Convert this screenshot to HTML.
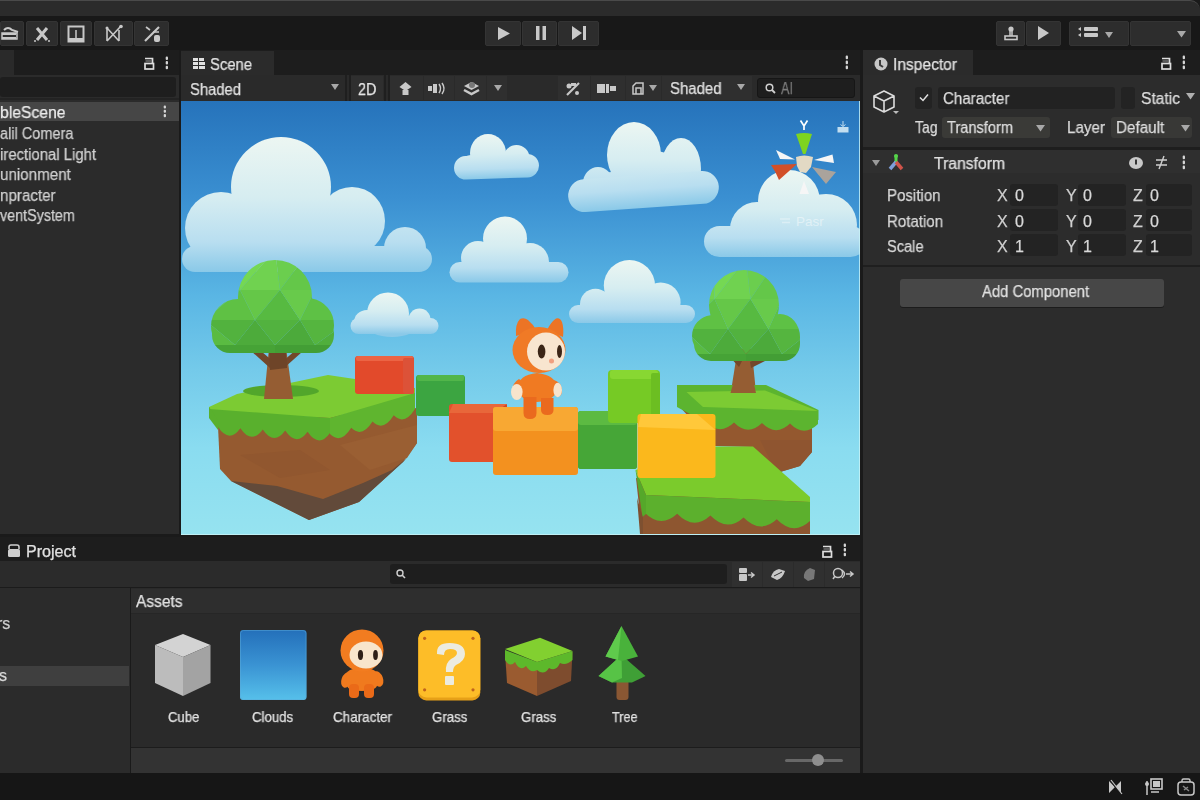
<!DOCTYPE html>
<html><head><meta charset="utf-8">
<style>
*{margin:0;padding:0;box-sizing:border-box}
html,body{width:1200px;height:800px;overflow:hidden;background:#1a1a1a;font-family:"Liberation Sans",sans-serif;color:#d4d4d4}
.a{position:absolute}
.t{position:absolute;white-space:nowrap;line-height:1;will-change:transform;-webkit-text-stroke:0.25px currentColor}
svg{position:absolute;overflow:visible}
</style></head><body>
<div class="a" style="left:0px;top:0px;width:1200px;height:16px;background:#2b2b2b;border-top:1px solid #4a4a4a;border-top-right-radius:10px"></div>
<div class="a" style="left:0px;top:16px;width:1200px;height:34px;background:#181818;"></div>
<div class="a" style="left:0px;top:21px;width:24px;height:25px;background:#2d2d2d;border-radius:2px;border:1px solid #343434"></div>
<div class="a" style="left:26px;top:21px;width:32px;height:25px;background:#2d2d2d;border-radius:2px;border:1px solid #343434"></div>
<div class="a" style="left:60px;top:21px;width:32px;height:25px;background:#2d2d2d;border-radius:2px;border:1px solid #343434"></div>
<div class="a" style="left:94px;top:21px;width:39px;height:25px;background:#2d2d2d;border-radius:2px;border:1px solid #343434"></div>
<div class="a" style="left:134px;top:21px;width:35px;height:25px;background:#2d2d2d;border-radius:2px;border:1px solid #343434"></div>
<div class="a" style="left:485px;top:21px;width:36px;height:25px;background:#2d2d2d;border-radius:2px;border:1px solid #343434"></div>
<div class="a" style="left:522px;top:21px;width:35px;height:25px;background:#2d2d2d;border-radius:2px;border:1px solid #343434"></div>
<div class="a" style="left:558px;top:21px;width:41px;height:25px;background:#2d2d2d;border-radius:2px;border:1px solid #343434"></div>
<div class="a" style="left:996px;top:21px;width:29px;height:25px;background:#2d2d2d;border-radius:2px;border:1px solid #343434"></div>
<div class="a" style="left:1026px;top:21px;width:35px;height:25px;background:#2d2d2d;border-radius:2px;border:1px solid #343434"></div>
<div class="a" style="left:1069px;top:21px;width:60px;height:25px;background:#2d2d2d;border-radius:2px;border:1px solid #343434"></div>
<div class="a" style="left:1130px;top:21px;width:61px;height:25px;background:#2d2d2d;border-radius:2px;border:1px solid #343434"></div>
<svg style="left:0px;top:24px" width="24" height="20" viewBox="0 0 24 20"><path d="M4 6 q4 -4 8 0 l6 2 M2 10 h14 M2 14 h14" stroke="#c8c8c8" stroke-width="2" fill="none"/><rect x="2" y="9" width="15" height="6" fill="none" stroke="#c8c8c8" stroke-width="1.5"/></svg>
<svg style="left:32px;top:24px" width="20" height="20" viewBox="0 0 20 20"><path d="M5 4 L15 16 M15 4 L5 16" stroke="#c8c8c8" stroke-width="3" fill="none"/><circle cx="3" cy="17" r="1" fill="#c8c8c8"/><circle cx="17" cy="17" r="1" fill="#c8c8c8"/></svg>
<svg style="left:67px;top:25px" width="18" height="18" viewBox="0 0 18 18"><rect x="1.5" y="1.5" width="15" height="15" fill="none" stroke="#c8c8c8" stroke-width="2"/><path d="M9 5 v8" stroke="#c8c8c8" stroke-width="1.5"/><rect x="2" y="13" width="14" height="3" fill="#c8c8c8"/></svg>
<svg style="left:104px;top:24px" width="20" height="20" viewBox="0 0 20 20"><path d="M3 4 V17 M3 4 L15 17 M15 6 V17 M3 17 L17 2" stroke="#c8c8c8" stroke-width="1.6" fill="none"/><circle cx="3" cy="4" r="1.5" fill="#c8c8c8"/><circle cx="17" cy="2.5" r="1.8" fill="#c8c8c8"/></svg>
<svg style="left:142px;top:24px" width="20" height="20" viewBox="0 0 20 20"><path d="M3 17 L17 3" stroke="#c8c8c8" stroke-width="2.2"/><path d="M4 3 l4 3 M11 8 h6" stroke="#c8c8c8" stroke-width="1.6"/><rect x="12" y="11" width="6" height="7" rx="2" fill="#c8c8c8"/></svg>
<svg style="left:497px;top:26px" width="14" height="15" viewBox="0 0 14 15"><path d="M1 1 L13 7.5 L1 14Z" fill="#c8c8c8"/></svg>
<svg style="left:535px;top:25px" width="12" height="16" viewBox="0 0 12 16"><rect x="1" y="1" width="3.5" height="14" fill="#c8c8c8"/><rect x="7.5" y="1" width="3.5" height="14" fill="#c8c8c8"/></svg>
<svg style="left:571px;top:25px" width="16" height="16" viewBox="0 0 16 16"><path d="M1 1 L11 8 L1 15Z" fill="#c8c8c8"/><rect x="12" y="1" width="3" height="14" fill="#c8c8c8"/></svg>
<svg style="left:1004px;top:25px" width="14" height="16" viewBox="0 0 14 16"><circle cx="7" cy="4" r="2.6" fill="#c8c8c8"/><path d="M6 6 v5 M8 6 v5" stroke="#c8c8c8" stroke-width="1.5"/><rect x="1" y="11" width="12" height="3.5" fill="none" stroke="#c8c8c8" stroke-width="1.6"/></svg>
<svg style="left:1036px;top:25px" width="14" height="16" viewBox="0 0 14 16"><path d="M2 1 L13 8 L2 15Z" fill="#c8c8c8"/></svg>
<svg style="left:1077px;top:26px" width="22" height="14" viewBox="0 0 22 14"><rect x="7" y="1" width="14" height="4" rx="1" fill="#c8c8c8"/><rect x="7" y="7" width="14" height="4" rx="1" fill="#c8c8c8"/><path d="M1 3 l3 -2 v4z M1 9 l3 -2 v4z" fill="#c8c8c8"/></svg>
<svg style="left:1105px;top:32px" width="10" height="8" viewBox="0 0 10 8"><path d="M0 0 h8 l-4 6z" fill="#a8a8a8"/></svg>
<svg style="left:1177px;top:31px" width="10" height="8" viewBox="0 0 10 8"><path d="M0 0 h9 l-4.5 6.5z" fill="#a8a8a8"/></svg>
<div class="a" style="left:0px;top:50px;width:179px;height:25px;background:#1d1d1d;"></div>
<div class="a" style="left:0px;top:50px;width:14px;height:25px;background:#2a2a2a;"></div>
<div class="a" style="left:0px;top:75px;width:179px;height:459px;background:#2b2b2b;"></div>
<div class="a" style="left:0px;top:77px;width:176px;height:20px;background:#1e1e1e;border-radius:3px;"></div>
<div class="a" style="left:0px;top:98px;width:179px;height:2px;background:#232323;"></div>
<div class="a" style="left:0px;top:102px;width:179px;height:19px;background:#464646;"></div>
<svg style="left:144px;top:57px" width="11" height="13" viewBox="0 0 11 13"><path d="M1 1.5 H8.5 V6.5" stroke="#dedede" stroke-width="1.7" fill="none"/><path d="M1.5 4 H7.5" stroke="#9a9a9a" stroke-width="1"/><rect x="1" y="6.5" width="8.5" height="5.5" fill="none" stroke="#dedede" stroke-width="1.7"/></svg>
<svg style="left:165px;top:56px" width="4" height="14" viewBox="0 0 4 14"><rect x="0.7" y="0.4" width="2.3" height="3.5" rx="1" fill="#d6d6d6"/><rect x="0.7" y="5.1" width="2.3" height="3.5" rx="1" fill="#d6d6d6"/><rect x="0.7" y="9.7" width="2.3" height="3.5" rx="1" fill="#d6d6d6"/></svg>
<svg style="left:163px;top:105px" width="4" height="13" viewBox="0 0 4 13"><rect x="0.7" y="0.4" width="2.3" height="3.1" rx="1" fill="#d6d6d6"/><rect x="0.7" y="4.7" width="2.3" height="3.1" rx="1" fill="#d6d6d6"/><rect x="0.7" y="9.1" width="2.3" height="3.1" rx="1" fill="#d6d6d6"/></svg>
<div class="t" style="left:0px;top:105.06px;font-size:16px;color:#ececec;transform:scaleX(0.9817);transform-origin:0 0;">bleScene</div>
<div class="t" style="left:0px;top:126.06px;font-size:16px;color:#d0d0d0;transform:scaleX(0.9071);transform-origin:0 0;">alil Comera</div>
<div class="t" style="left:0px;top:146.66px;font-size:16px;color:#d0d0d0;transform:scaleX(0.9305);transform-origin:0 0;">irectional Light</div>
<div class="t" style="left:0px;top:167.36px;font-size:16px;color:#d0d0d0;transform:scaleX(0.9476);transform-origin:0 0;">unionment</div>
<div class="t" style="left:0px;top:187.86px;font-size:16px;color:#d0d0d0;transform:scaleX(0.9473);transform-origin:0 0;">npracter</div>
<div class="t" style="left:0px;top:208.36px;font-size:16px;color:#d0d0d0;transform:scaleX(0.8949);transform-origin:0 0;">ventSystem</div>
<div class="a" style="left:181px;top:50px;width:679px;height:25px;background:#1d1d1d;"></div>
<div class="a" style="left:181px;top:51px;width:93px;height:24px;background:#2b2b2b;"></div>
<svg style="left:193px;top:58px" width="12" height="12" viewBox="0 0 12 12"><rect x="0" y="0" width="5" height="3" fill="#e0e0e0"/><rect x="6" y="0" width="5" height="3" fill="#e0e0e0"/><rect x="0" y="4" width="5" height="3" fill="#e0e0e0"/><rect x="6" y="4" width="6" height="3" fill="#e0e0e0"/><rect x="0" y="8" width="5" height="3" fill="#e0e0e0"/><rect x="6" y="8" width="6" height="3" fill="#e0e0e0"/></svg>
<div class="t" style="left:210px;top:57.06px;font-size:16px;color:#e2e2e2;transform:scaleX(0.9258);transform-origin:0 0;">Scene</div>
<svg style="left:845px;top:55px" width="4" height="15" viewBox="0 0 4 15"><rect x="0.7" y="0.4" width="2.3" height="3.8" rx="1" fill="#d6d6d6"/><rect x="0.7" y="5.4" width="2.3" height="3.8" rx="1" fill="#d6d6d6"/><rect x="0.7" y="10.4" width="2.3" height="3.8" rx="1" fill="#d6d6d6"/></svg>
<div class="a" style="left:181px;top:75px;width:679px;height:26px;background:#2a2a2a;"></div>
<div class="a" style="left:345px;top:75px;width:2px;height:26px;background:#1f1f1f;"></div>
<div class="a" style="left:349px;top:75px;width:2px;height:26px;background:#1f1f1f;"></div>
<div class="t" style="left:190px;top:82.06px;font-size:16px;color:#e0e0e0;transform:scaleX(0.9245);transform-origin:0 0;">Shaded</div>
<svg style="left:331px;top:84px" width="8" height="7" viewBox="0 0 8 7"><path d="M0 0 h8 l-4 6z" fill="#a8a8a8"/></svg>
<div class="a" style="left:351px;top:76px;width:32px;height:24px;background:#2f2f2f;"></div>
<div class="a" style="left:390px;top:76px;width:33px;height:24px;background:#2f2f2f;"></div>
<div class="a" style="left:424px;top:76px;width:30px;height:24px;background:#2f2f2f;"></div>
<div class="a" style="left:455px;top:76px;width:31px;height:24px;background:#2f2f2f;"></div>
<div class="a" style="left:487px;top:76px;width:20px;height:24px;background:#2f2f2f;"></div>
<div class="a" style="left:558px;top:76px;width:32px;height:24px;background:#2f2f2f;"></div>
<div class="a" style="left:591px;top:76px;width:34px;height:24px;background:#2f2f2f;"></div>
<div class="a" style="left:626px;top:76px;width:35px;height:24px;background:#2f2f2f;"></div>
<div class="a" style="left:662px;top:76px;width:90px;height:24px;background:#2f2f2f;"></div>
<div class="a" style="left:384px;top:75px;width:2px;height:26px;background:#1f1f1f;"></div>
<div class="a" style="left:388px;top:75px;width:2px;height:26px;background:#1f1f1f;"></div>
<div class="t" style="left:358px;top:81.56px;font-size:16px;color:#e6e6e6;transform:scaleX(0.8947);transform-origin:0 0;">2D</div>
<svg style="left:399px;top:82px" width="13" height="13" viewBox="0 0 13 13"><path d="M6.5 0 L12.5 5 L6.5 9 L0.5 5Z" fill="#c8c8c8"/><rect x="3.5" y="8" width="6" height="5" fill="#c8c8c8"/></svg>
<svg style="left:428px;top:83px" width="18" height="11" viewBox="0 0 18 11"><rect x="0" y="3" width="4" height="5" fill="#c8c8c8"/><rect x="5" y="1" width="4" height="9" fill="#c8c8c8"/><path d="M11 1 q3 4.5 0 9 M14 0 q4 5.5 0 11" stroke="#c8c8c8" stroke-width="1.5" fill="none"/></svg>
<svg style="left:463px;top:80px" width="17" height="15" viewBox="0 0 17 15"><path d="M1 10 L8.5 14 L16 10" stroke="#c8c8c8" stroke-width="2.5" fill="none"/><path d="M1 6 L8.5 2 L16 6 L8.5 10Z" fill="#c8c8c8"/><circle cx="9" cy="5" r="3" fill="#777"/></svg>
<svg style="left:494px;top:85px" width="8" height="7" viewBox="0 0 8 7"><path d="M0 0 h8 l-4 6z" fill="#a8a8a8"/></svg>
<svg style="left:565px;top:82px" width="16" height="14" viewBox="0 0 16 14"><path d="M2 13 L14 1" stroke="#c8c8c8" stroke-width="2.2"/><circle cx="4" cy="4" r="2.5" fill="#c8c8c8"/><circle cx="12" cy="11" r="2" fill="#c8c8c8"/><rect x="6" y="1" width="5" height="3" fill="#c8c8c8"/></svg>
<svg style="left:597px;top:84px" width="20" height="9" viewBox="0 0 20 9"><rect x="0" y="0" width="8" height="9" fill="#c8c8c8"/><rect x="9" y="0" width="3" height="9" fill="#c8c8c8"/><rect x="13" y="2" width="6" height="5" fill="#c8c8c8"/></svg>
<svg style="left:632px;top:82px" width="12" height="13" viewBox="0 0 12 13"><path d="M1 12 V4 L4 1 H11 V12 Z M4 12 V6 h5 v6" stroke="#c8c8c8" stroke-width="1.5" fill="none"/></svg>
<svg style="left:649px;top:85px" width="8" height="7" viewBox="0 0 8 7"><path d="M0 0 h8 l-4 6z" fill="#a8a8a8"/></svg>
<div class="t" style="left:669.7px;top:81.06px;font-size:16px;color:#e0e0e0;transform:scaleX(0.9354);transform-origin:0 0;">Shaded</div>
<svg style="left:737px;top:84px" width="9" height="7" viewBox="0 0 9 7"><path d="M0 0 h8 l-4 6z" fill="#a8a8a8"/></svg>
<div class="a" style="left:757px;top:78px;width:98px;height:20px;background:#1e1e1e;border-radius:3px;border:1px solid #161616"></div>
<svg style="left:765px;top:83px" width="11" height="11" viewBox="0 0 11 11"><circle cx="4.5" cy="4.5" r="3.3" stroke="#cfcfcf" stroke-width="1.5" fill="none"/><path d="M7 7 L10 10" stroke="#cfcfcf" stroke-width="1.8"/></svg>
<div class="t" style="left:781.3px;top:80.66px;font-size:16px;color:#7c7c7c;transform:scaleX(0.7938);transform-origin:0 0;">AI</div>
<svg style="left:181px;top:101px;overflow:hidden" width="679" height="434" viewBox="181 101 679 434"><defs><linearGradient id="sky" x1="0" y1="101" x2="0" y2="535" gradientUnits="userSpaceOnUse">
<stop offset="0" stop-color="#2673bb"/><stop offset="0.22" stop-color="#3a8fd1"/><stop offset="0.45" stop-color="#5ab6e4"/><stop offset="0.62" stop-color="#74caea"/><stop offset="0.8" stop-color="#8adcf0"/><stop offset="1" stop-color="#96e3f0"/></linearGradient><linearGradient id="c0" x1="0" y1="137" x2="0" y2="272" gradientUnits="userSpaceOnUse"><stop offset="0" stop-color="#ecf6f2"/><stop offset="0.45" stop-color="#d6edf1"/><stop offset="0.78" stop-color="#b8def0"/><stop offset="1" stop-color="#8ac9e8"/></linearGradient><linearGradient id="c1" x1="0" y1="134" x2="0" y2="178.5" gradientUnits="userSpaceOnUse"><stop offset="0" stop-color="#ecf6f2"/><stop offset="0.45" stop-color="#d6edf1"/><stop offset="0.78" stop-color="#b8def0"/><stop offset="1" stop-color="#8ac9e8"/></linearGradient><linearGradient id="c2" x1="0" y1="122" x2="0" y2="208" gradientUnits="userSpaceOnUse"><stop offset="0" stop-color="#ecf6f2"/><stop offset="0.45" stop-color="#d6edf1"/><stop offset="0.78" stop-color="#b8def0"/><stop offset="1" stop-color="#8ac9e8"/></linearGradient><linearGradient id="c3" x1="0" y1="170" x2="0" y2="257" gradientUnits="userSpaceOnUse"><stop offset="0" stop-color="#ecf6f2"/><stop offset="0.45" stop-color="#d6edf1"/><stop offset="0.78" stop-color="#b8def0"/><stop offset="1" stop-color="#8ac9e8"/></linearGradient><linearGradient id="c4" x1="0" y1="216.5" x2="0" y2="282.5" gradientUnits="userSpaceOnUse"><stop offset="0" stop-color="#ecf6f2"/><stop offset="0.45" stop-color="#d6edf1"/><stop offset="0.78" stop-color="#b8def0"/><stop offset="1" stop-color="#8ac9e8"/></linearGradient><linearGradient id="c5" x1="0" y1="292.5" x2="0" y2="334" gradientUnits="userSpaceOnUse"><stop offset="0" stop-color="#ecf6f2"/><stop offset="0.45" stop-color="#d6edf1"/><stop offset="0.78" stop-color="#b8def0"/><stop offset="1" stop-color="#8ac9e8"/></linearGradient><linearGradient id="c6" x1="0" y1="260.0" x2="0" y2="323" gradientUnits="userSpaceOnUse"><stop offset="0" stop-color="#ecf6f2"/><stop offset="0.45" stop-color="#d6edf1"/><stop offset="0.78" stop-color="#b8def0"/><stop offset="1" stop-color="#8ac9e8"/></linearGradient><clipPath id="tc1"><circle cx="275" cy="297" r="37"/><circle cx="238" cy="326" r="27"/><circle cx="307" cy="325" r="27"/><rect x="212" y="316" width="122" height="37" rx="18"/></clipPath><clipPath id="tc2"><circle cx="744" cy="305" r="35"/><circle cx="713" cy="336" r="21"/><ellipse cx="780" cy="337" rx="20" ry="23"/><rect x="694" y="324" width="106" height="37" rx="17"/></clipPath></defs><rect x="181" y="101" width="679" height="434" fill="url(#sky)"/><g fill="url(#c0)"><ellipse cx="281" cy="187" rx="50" ry="50"/><ellipse cx="221" cy="228" rx="36" ry="36"/><ellipse cx="278" cy="243" rx="23" ry="23"/><ellipse cx="352" cy="221" rx="33" ry="34"/><ellipse cx="405" cy="248" rx="21" ry="21"/><ellipse cx="305" cy="238" rx="32" ry="32"/><ellipse cx="250" cy="250" rx="22" ry="22"/><rect x="182" y="246" width="250" height="26" rx="13.0"/></g><g fill="url(#c1)"><ellipse cx="488" cy="153" rx="18" ry="19"/><ellipse cx="516.5" cy="158" rx="13" ry="13"/><ellipse cx="472" cy="166" rx="12" ry="11"/><rect x="454" y="155" width="85" height="23.5" rx="11.75" transform="rotate(-2 496.5 166.75)"/></g><g fill="url(#c2)"><ellipse cx="634" cy="155" rx="27" ry="33"/><ellipse cx="681" cy="169" rx="20" ry="31"/><ellipse cx="598" cy="183" rx="15" ry="16"/><ellipse cx="655" cy="175" rx="26" ry="24"/><ellipse cx="612" cy="186" rx="16" ry="14"/><rect x="568" y="175" width="151" height="33" rx="16.5" transform="rotate(-4 643.5 191.5)"/></g><g fill="url(#c3)"><ellipse cx="789" cy="201" rx="31" ry="31"/><ellipse cx="826" cy="225" rx="31" ry="31"/><ellipse cx="757" cy="229" rx="27" ry="27"/><rect x="704" y="226" width="162" height="31" rx="15.5"/></g><g fill="url(#c4)"><ellipse cx="505" cy="238.5" rx="22" ry="22"/><ellipse cx="478" cy="258" rx="17" ry="17"/><ellipse cx="530" cy="262" rx="19" ry="19"/><ellipse cx="506" cy="260" rx="28" ry="16"/><rect x="449.5" y="262" width="119.0" height="20.5" rx="10.25"/></g><g fill="url(#c5)"><ellipse cx="388" cy="313.5" rx="21" ry="21"/><ellipse cx="367" cy="322" rx="13" ry="12"/><ellipse cx="419.5" cy="319.5" rx="11" ry="11"/><ellipse cx="392" cy="325" rx="26" ry="12"/><rect x="350.5" y="318" width="88.0" height="16" rx="8.0"/></g><g fill="url(#c6)"><ellipse cx="629.4" cy="285.6" rx="25.6" ry="25.6"/><ellipse cx="595.5" cy="304.3" rx="15.5" ry="15.5"/><ellipse cx="660.6" cy="302.5" rx="20" ry="20"/><ellipse cx="628" cy="303" rx="32" ry="15"/><rect x="569" y="305" width="126" height="18" rx="9.0"/></g><polygon points="218,426 417,408 417,443 403,462 359,502 309,520 231,481 220,469" fill="#955a30" /><polygon points="231,481 277,486 323,499 363,483 392,470 407,458 403,462 359,502 309,520" fill="#624a3a" /><polygon points="340,445 417,425 417,443 407,458 370,470" fill="#9a5f33" /><polygon points="240,455 300,450 330,470 280,478" fill="#91572f" /><polygon points="209,407 237,394 328,375 415,388 415,396 330,418 209,412" fill="#7ccb33" /><path d="M209,409 L330,418 L330,433 Q318.8,448.5 307.6,431.8 Q296.4,447.30000000000007 285.2,430.6 Q274.0,446.1 262.8,429.4 Q251.60000000000002,444.9 240.4,428.2 Q229.2,443.70000000000005 218.0,427.0 Z" fill="#59b02d"/><path d="M330,418 L415,393 L415,409 Q404.375,425.925 393.75,415.25 Q383.125,432.175 372.5,421.5 Q361.875,438.425 351.25,427.75 Q340.625,444.675 330.0,434.0 Z" fill="#5fb52f"/><polygon points="209,407 209,418 218,430 218,420" fill="#59b02d" /><ellipse cx="281" cy="391" rx="38" ry="6" fill="#52a62b"/><path d="M269,348 L286,348 L293,399 L264,399 Z" fill="#955d33"/><path d="M250,350 L270,368 L274,362 L256,347 Z M302,352 L284,368 L282,362 L297,349 Z" fill="#73472a"/><path d="M269,350 L286,350 L287,368 L270,370Z" fill="#6e4428"/><g clip-path="url(#tc1)"><g transform="translate(0,0) scale(1,1)"><polygon points="205,250 240,250 240,290 205,290" fill="#70d250"/><polygon points="240,250 275,250 240,290" fill="#75d853"/><polygon points="275,250 240,290 280,290" fill="#70d250"/><polygon points="275,250 310,250 280,290" fill="#6bce4e"/><polygon points="310,250 280,290 315,290" fill="#64c749"/><polygon points="310,250 350,250 350,290 315,290" fill="#61c346"/><polygon points="205,290 240,290 205,320" fill="#69cd4c"/><polygon points="240,290 205,320 255,320" fill="#5fc144"/><polygon points="240,290 280,290 255,320" fill="#65c748"/><polygon points="280,290 255,320 300,320" fill="#57ba41"/><polygon points="280,290 315,290 300,320" fill="#68ca4b"/><polygon points="315,290 300,320 350,320" fill="#5ec145"/><polygon points="315,290 350,290 350,320" fill="#69cb4c"/><polygon points="205,320 255,320 235,345" fill="#52b23e"/><polygon points="205,320 235,345 205,345" fill="#5abb42"/><polygon points="255,320 235,345 275,345" fill="#4dab3b"/><polygon points="255,320 300,320 275,345" fill="#52b23f"/><polygon points="300,320 275,345 315,345" fill="#4caa3b"/><polygon points="300,320 350,320 315,345" fill="#55b53f"/><polygon points="350,320 315,345 350,345" fill="#50af3c"/><polygon points="205,345 275,345 275,370 205,370" fill="#46a336"/><polygon points="275,345 350,345 350,370 275,370" fill="#439e35"/></g></g><rect x="355" y="356" width="59" height="38" rx="3" fill="#e24a2b"/><rect x="356" y="356" width="57" height="5" rx="2" fill="#ec6444"/><rect x="403" y="358" width="11" height="36" rx="2" fill="#dc5238"/><rect x="416" y="375" width="49" height="41" rx="3" fill="#3ca541"/><rect x="417" y="375" width="47" height="6" rx="2" fill="#52b64a"/><rect x="449" y="404" width="58" height="58" rx="3" fill="#e2512c"/><polygon points="453,404 507,404 497,413 449,413" fill="#e8673a" /><polygon points="494,413 507,404 507,440 494,462" fill="#cc472b" /><rect x="493" y="407" width="85" height="68" rx="3" fill="#f3911f"/><rect x="493" y="407" width="85" height="24" rx="3" fill="#f8a833"/><rect x="578" y="411" width="59" height="58" rx="3" fill="#46a637"/><rect x="578" y="411" width="59" height="14" rx="3" fill="#5cba42"/><rect x="608" y="370" width="52" height="53" rx="4" fill="#76ca25"/><rect x="610" y="370" width="48" height="9" rx="3" fill="#88d732"/><rect x="651" y="373" width="9" height="50" rx="2" fill="#6cbe22"/><polygon points="678,405 812,426 812,452 800,466 780,472 752,447 715,446 715,425 690,418" fill="#94582f" /><polygon points="760,440 812,440 812,452 800,466 780,472 770,460" fill="#8f5530" /><path d="M737.7,349 L751.7,349 L756,393 L730.7,393 Z" fill="#955d33"/><path d="M727,354 L739,367 L742,361 L732,351 Z M767,360 L751,368 L750,362 L763,356 Z" fill="#73472a"/><g clip-path="url(#tc2)"><g transform="translate(498.5,9) scale(0.9,1.0)"><polygon points="205,250 240,250 240,290 205,290" fill="#70d250"/><polygon points="240,250 275,250 240,290" fill="#75d853"/><polygon points="275,250 240,290 280,290" fill="#70d250"/><polygon points="275,250 310,250 280,290" fill="#6bce4e"/><polygon points="310,250 280,290 315,290" fill="#64c749"/><polygon points="310,250 350,250 350,290 315,290" fill="#61c346"/><polygon points="205,290 240,290 205,320" fill="#69cd4c"/><polygon points="240,290 205,320 255,320" fill="#5fc144"/><polygon points="240,290 280,290 255,320" fill="#65c748"/><polygon points="280,290 255,320 300,320" fill="#57ba41"/><polygon points="280,290 315,290 300,320" fill="#68ca4b"/><polygon points="315,290 300,320 350,320" fill="#5ec145"/><polygon points="315,290 350,290 350,320" fill="#69cb4c"/><polygon points="205,320 255,320 235,345" fill="#52b23e"/><polygon points="205,320 235,345 205,345" fill="#5abb42"/><polygon points="255,320 235,345 275,345" fill="#4dab3b"/><polygon points="255,320 300,320 275,345" fill="#52b23f"/><polygon points="300,320 275,345 315,345" fill="#4caa3b"/><polygon points="300,320 350,320 315,345" fill="#55b53f"/><polygon points="350,320 315,345 350,345" fill="#50af3c"/><polygon points="205,345 275,345 275,370 205,370" fill="#46a336"/><polygon points="275,345 350,345 350,370 275,370" fill="#439e35"/></g></g><polygon points="677,385 766,385 818.5,410 818.5,420 712,422 690,414 677,407" fill="#5cb42f" /><path d="M703,407 L818,411 L818,424 Q804.0,437.55 790.0,423.5 Q776.0,437.05 762.0,423.0 Q748.0,436.55 734.0,422.5 Q720.0,436.05 706.0,422.0 Z" fill="#5cb42f"/><polygon points="686.5,392 765,390.5 818,411 703,407" fill="#7ccb33" /><path d="M730.5,393 L756,393 L754,384 L733,384Z" fill="#955d33"/><polygon points="636,478 810,500 810,534 642,534" fill="#8e5630" /><polygon points="635.5,470 714,446.6 753,446.6 810,497 810,502 646,495" fill="#7bcb2c" /><path d="M646,495 L810,502 L810,521 Q793.4,536.2 776.8,519.2 Q760.2,534.4 743.6,517.4 Q727.0,532.6 710.4,515.6 Q693.8,530.8000000000001 677.2,513.8 Q660.6,529.0 644.0,512.0 Z" fill="#5cb02d"/><polygon points="635.5,470 646,495 646,514 642.5,517" fill="#55a82a" /><path d="M637,498 L643,518 L643,534 L640,534 Z" fill="#7e5030"/><rect x="578" y="425" width="59" height="44" rx="3" fill="#46a637"/><rect x="637.5" y="414" width="78" height="64" rx="3" fill="#fbb81c"/><path d="M641,414 L697,414 L715.5,430 L638,427 Z" fill="#ffc83a"/><path d="M516,336 Q515,324 520,319 Q524,317 528,320 Q533,324 536,330 Z M547,330 Q551,322 556,318.5 Q560,317 562,322 Q564,328 563,337 Z" fill="#ec7425"/><ellipse cx="539" cy="350" rx="26.5" ry="23" fill="#f07a26"/><path d="M520,395 Q512,398 512,391 Q513,382 519,379 L524,383 Z M554,380 Q561,382 562,390 Q562,398 556,396 Z" fill="#ef7727"/><path d="M518,388 Q518,375 537,373 Q556,375 557,388 Q556,401 537,402 Q519,401 518,388Z" fill="#f07a22"/><path d="M523.5,397 h13 v16 q0,6 -6.5,6 q-6.5,0 -6.5,-6 Z M541,398 h12.5 v12 q0,5 -6,5 q-6.5,0 -6.5,-5 Z" fill="#ea6a1e"/><ellipse cx="516.8" cy="392" rx="5.8" ry="8" fill="#f7e4cc"/><ellipse cx="557.7" cy="390" rx="4.3" ry="7.2" fill="#f7e4cc"/><ellipse cx="546" cy="351.6" rx="19" ry="19" fill="#f8e5cf"/><ellipse cx="541.6" cy="351.6" rx="3.8" ry="7" fill="#3b2516"/><ellipse cx="559.5" cy="351.5" rx="2.5" ry="6.5" fill="#3b2516"/><circle cx="551.5" cy="361" r="2.5" fill="#ef9f7f"/><path d="M800.5,120.5 L804,126 L807.5,120.5 M804,126 V130" stroke="#ffffff" stroke-width="1.7" fill="none"/><path d="M796,134 Q804,132 812,134 L805.5,154 L803,154 Z" fill="#7ed420"/><polygon points="776,150 795,159.5 780,159" fill="#f6f6f6" /><polygon points="814,160 832.5,154.5 834,163" fill="#f6f6f6" /><path d="M771,165 L797,164 L779,180 Q776,172 771,165Z" fill="#d24f28"/><path d="M812,167 L836,172 L826,184 Z" fill="#aaa39c"/><polygon points="799.5,194 809,194 804,181" fill="#f6f6f6" /><path d="M796,157 Q804,154 813,157 L811,167 L806,173 L800,172 L797,166 Z" fill="#e2d9c4"/><rect x="837.5" y="127" width="11" height="5.5" fill="#c2def0"/><path d="M843,121 V126 M840.5,124.5 L843,126.5 L845.5,124.5" stroke="#c2def0" stroke-width="1" fill="none"/><text x="796" y="226" font-family="Liberation Sans" font-size="13.5" fill="#ffffff" opacity="0.45">Pasr</text><path d="M780,219 h10 M782,222.5 h8" stroke="#ffffff" stroke-width="1.3" opacity="0.35"/><path d="M181,534.5 H859.5 V101" stroke="#c8f2f6" stroke-width="1" fill="none" opacity="0.8"/></svg>
<div class="a" style="left:863px;top:50px;width:337px;height:25px;background:#1d1d1d;"></div>
<div class="a" style="left:863px;top:50px;width:110px;height:25px;background:#2b2b2b;"></div>
<svg style="left:874px;top:57px" width="14" height="14" viewBox="0 0 14 14"><circle cx="7" cy="7" r="6.5" fill="#c6c6c6"/><path d="M6 3 V8 L9 10" stroke="#3a3a3a" stroke-width="2" fill="none"/></svg>
<div class="t" style="left:893px;top:57.16px;font-size:16px;color:#e2e2e2;transform:scaleX(0.9725);transform-origin:0 0;">Inspector</div>
<svg style="left:1161px;top:57px" width="11" height="13" viewBox="0 0 11 13"><path d="M1 1.5 H8.5 V6.5" stroke="#dedede" stroke-width="1.7" fill="none"/><path d="M1.5 4 H7.5" stroke="#9a9a9a" stroke-width="1"/><rect x="1" y="6.5" width="8.5" height="5.5" fill="none" stroke="#dedede" stroke-width="1.7"/></svg>
<svg style="left:1182px;top:55px" width="4" height="15" viewBox="0 0 4 15"><rect x="0.7" y="0.4" width="2.3" height="3.8" rx="1" fill="#d6d6d6"/><rect x="0.7" y="5.4" width="2.3" height="3.8" rx="1" fill="#d6d6d6"/><rect x="0.7" y="10.4" width="2.3" height="3.8" rx="1" fill="#d6d6d6"/></svg>
<div class="a" style="left:863px;top:75px;width:337px;height:698px;background:#2c2c2c;"></div>
<svg style="left:873px;top:89px" width="26" height="27" viewBox="0 0 26 27"><path d="M11 2 L21 7 L21 18 L11 23 L1 18 L1 7 Z M1 7 L11 12 L21 7 M11 12 V23" stroke="#dcdcdc" stroke-width="1.6" fill="none" stroke-linejoin="round"/><path d="M20 22 h6 l-3 3z" fill="#bbb"/></svg>
<div class="a" style="left:915px;top:87px;width:17px;height:22px;background:#232323;border-radius:3px;"></div>
<svg style="left:919px;top:93px" width="10" height="9" viewBox="0 0 10 9"><path d="M1 4.5 L4 7.5 L9 1.5" stroke="#e0e0e0" stroke-width="1.5" fill="none"/></svg>
<div class="a" style="left:938px;top:87px;width:177px;height:22px;background:#222222;border-radius:3px;"></div>
<div class="t" style="left:943px;top:91.16px;font-size:16px;color:#dedede;transform:scaleX(0.9452);transform-origin:0 0;">Character</div>
<div class="a" style="left:1121px;top:87px;width:14px;height:22px;background:#232323;border-radius:3px;"></div>
<div class="t" style="left:1141px;top:91.16px;font-size:16px;color:#dedede;transform:scaleX(0.9746);transform-origin:0 0;">Static</div>
<svg style="left:1186px;top:93px" width="9" height="7" viewBox="0 0 9 7"><path d="M0 0 h9 l-4.5 6.5z" fill="#b0b0b0"/></svg>
<div class="t" style="left:914.5px;top:119.86px;font-size:16px;color:#dcdcdc;transform:scaleX(0.8722);transform-origin:0 0;">Tag</div>
<div class="a" style="left:942px;top:117px;width:108px;height:21px;background:#3a3a37;border-radius:3px;"></div>
<div class="t" style="left:947px;top:119.86px;font-size:16px;color:#dedede;transform:scaleX(0.9128);transform-origin:0 0;">Transform</div>
<svg style="left:1036px;top:125px" width="9" height="7" viewBox="0 0 9 7"><path d="M0 0 h9 l-4.5 6.5z" fill="#a8a8a8"/></svg>
<div class="t" style="left:1067px;top:119.86px;font-size:16px;color:#dcdcdc;transform:scaleX(0.9494);transform-origin:0 0;">Layer</div>
<div class="a" style="left:1111px;top:117px;width:81px;height:21px;background:#383836;border-radius:3px;"></div>
<div class="t" style="left:1116.4px;top:119.86px;font-size:16px;color:#dedede;transform:scaleX(0.9508);transform-origin:0 0;">Default</div>
<svg style="left:1181px;top:125px" width="9" height="7" viewBox="0 0 9 7"><path d="M0 0 h9 l-4.5 6.5z" fill="#a8a8a8"/></svg>
<div class="a" style="left:863px;top:147px;width:337px;height:3px;background:#1e1e1e;"></div>
<div class="a" style="left:863px;top:150px;width:337px;height:23px;background:#2f2f2f;"></div>
<svg style="left:872px;top:160px" width="8" height="6" viewBox="0 0 8 6"><path d="M0 0 h8 l-4 6z" fill="#9a9a9a"/></svg>
<svg style="left:888px;top:154px" width="16" height="17" viewBox="0 0 16 17"><path d="M8 8 L8 1" stroke="#55d44a" stroke-width="3"/><path d="M8 8 L2 15" stroke="#7e9ed8" stroke-width="3.5"/><path d="M8 8 L14 15" stroke="#d0544a" stroke-width="3.5"/><circle cx="8" cy="2" r="2" fill="#55d44a"/></svg>
<div class="t" style="left:934px;top:156.36px;font-size:16px;color:#e0e0e0;transform:scaleX(0.9820);transform-origin:0 0;">Transform</div>
<svg style="left:1129px;top:157px" width="14" height="12" viewBox="0 0 14 12"><ellipse cx="7" cy="6" rx="7" ry="6" fill="#c8c8c8"/><rect x="6" y="2.5" width="2" height="5" fill="#333"/></svg>
<svg style="left:1155px;top:155px" width="13" height="15" viewBox="0 0 13 15"><path d="M1 5 H12 M1 10 H12 M9 1 L4 14" stroke="#cfcfcf" stroke-width="1.4" fill="none"/></svg>
<svg style="left:1182px;top:155px" width="4" height="15" viewBox="0 0 4 15"><rect x="0.7" y="0.4" width="2.3" height="3.8" rx="1" fill="#d6d6d6"/><rect x="0.7" y="5.4" width="2.3" height="3.8" rx="1" fill="#d6d6d6"/><rect x="0.7" y="10.4" width="2.3" height="3.8" rx="1" fill="#d6d6d6"/></svg>
<div class="t" style="left:887px;top:188.36px;font-size:16px;color:#d8d8d8;transform:scaleX(0.9399);transform-origin:0 0;">Position</div>
<div class="t" style="left:997.4px;top:188.36px;font-size:16px;color:#d0d0d0;">X</div>
<div class="a" style="left:1010px;top:184px;width:48px;height:22px;background:#232323;border-radius:3px;"></div>
<div class="t" style="left:1014.5px;top:188.36px;font-size:16px;color:#d8d8d8;">0</div>
<div class="t" style="left:1066px;top:188.36px;font-size:16px;color:#d0d0d0;">Y</div>
<div class="a" style="left:1078px;top:184px;width:48px;height:22px;background:#232323;border-radius:3px;"></div>
<div class="t" style="left:1082.5px;top:188.36px;font-size:16px;color:#d8d8d8;">0</div>
<div class="t" style="left:1133.4px;top:188.36px;font-size:16px;color:#d0d0d0;">Z</div>
<div class="a" style="left:1145.5px;top:184px;width:46.5px;height:22px;background:#232323;border-radius:3px;"></div>
<div class="t" style="left:1150.0px;top:188.36px;font-size:16px;color:#d8d8d8;">0</div>
<div class="t" style="left:887px;top:213.86px;font-size:16px;color:#d8d8d8;transform:scaleX(0.9397);transform-origin:0 0;">Rotation</div>
<div class="t" style="left:997.4px;top:213.86px;font-size:16px;color:#d0d0d0;">X</div>
<div class="a" style="left:1010px;top:209px;width:48px;height:22px;background:#232323;border-radius:3px;"></div>
<div class="t" style="left:1014.5px;top:213.86px;font-size:16px;color:#d8d8d8;">0</div>
<div class="t" style="left:1066px;top:213.86px;font-size:16px;color:#d0d0d0;">Y</div>
<div class="a" style="left:1078px;top:209px;width:48px;height:22px;background:#232323;border-radius:3px;"></div>
<div class="t" style="left:1082.5px;top:213.86px;font-size:16px;color:#d8d8d8;">0</div>
<div class="t" style="left:1133.4px;top:213.86px;font-size:16px;color:#d0d0d0;">Z</div>
<div class="a" style="left:1145.5px;top:209px;width:46.5px;height:22px;background:#232323;border-radius:3px;"></div>
<div class="t" style="left:1150.0px;top:213.86px;font-size:16px;color:#d8d8d8;">0</div>
<div class="t" style="left:887px;top:239.36px;font-size:16px;color:#d8d8d8;transform:scaleX(0.9120);transform-origin:0 0;">Scale</div>
<div class="t" style="left:997.4px;top:239.36px;font-size:16px;color:#d0d0d0;">X</div>
<div class="a" style="left:1010px;top:234px;width:48px;height:22px;background:#232323;border-radius:3px;"></div>
<div class="t" style="left:1014.5px;top:239.36px;font-size:16px;color:#d8d8d8;">1</div>
<div class="t" style="left:1066px;top:239.36px;font-size:16px;color:#d0d0d0;">Y</div>
<div class="a" style="left:1078px;top:234px;width:48px;height:22px;background:#232323;border-radius:3px;"></div>
<div class="t" style="left:1082.5px;top:239.36px;font-size:16px;color:#d8d8d8;">1</div>
<div class="t" style="left:1133.4px;top:239.36px;font-size:16px;color:#d0d0d0;">Z</div>
<div class="a" style="left:1145.5px;top:234px;width:46.5px;height:22px;background:#232323;border-radius:3px;"></div>
<div class="t" style="left:1150.0px;top:239.36px;font-size:16px;color:#d8d8d8;">1</div>
<div class="a" style="left:863px;top:265px;width:337px;height:2px;background:#1f1f1f;"></div>
<div class="a" style="left:900px;top:279px;width:264px;height:28px;background:#474747;border-radius:3px;box-shadow:0 1px 0 #1c1c1c"></div>
<div class="t" style="left:982.4px;top:284.36px;font-size:16px;color:#e0e0e0;transform:scaleX(0.9262);transform-origin:0 0;">Add Component</div>
<div class="a" style="left:0px;top:537px;width:860px;height:24px;background:#1d1d1d;"></div>
<svg style="left:7px;top:544px" width="14" height="14" viewBox="0 0 14 14"><path d="M2 5 V3 a2 2 0 0 1 2-2 H10 a2 2 0 0 1 2 2 V5" stroke="#cfcfcf" stroke-width="1.5" fill="none"/><rect x="1" y="5" width="12" height="8" rx="1.5" fill="#cfcfcf"/></svg>
<div class="t" style="left:26px;top:544.06px;font-size:16px;color:#e0e0e0;transform:scaleX(1.0041);transform-origin:0 0;">Project</div>
<svg style="left:822px;top:545px" width="11" height="13" viewBox="0 0 11 13"><path d="M1 1.5 H8.5 V6.5" stroke="#dedede" stroke-width="1.7" fill="none"/><path d="M1.5 4 H7.5" stroke="#9a9a9a" stroke-width="1"/><rect x="1" y="6.5" width="8.5" height="5.5" fill="none" stroke="#dedede" stroke-width="1.7"/></svg>
<svg style="left:843px;top:543px" width="4" height="14" viewBox="0 0 4 14"><rect x="0.7" y="0.4" width="2.3" height="3.5" rx="1" fill="#d6d6d6"/><rect x="0.7" y="5.1" width="2.3" height="3.5" rx="1" fill="#d6d6d6"/><rect x="0.7" y="9.7" width="2.3" height="3.5" rx="1" fill="#d6d6d6"/></svg>
<div class="a" style="left:0px;top:561px;width:860px;height:26px;background:#2b2b2b;"></div>
<div class="a" style="left:390px;top:564px;width:337px;height:20px;background:#1e1e1e;border-radius:3px;"></div>
<svg style="left:396px;top:569px" width="10" height="10" viewBox="0 0 10 10"><circle cx="4" cy="4" r="3" stroke="#cfcfcf" stroke-width="1.4" fill="none"/><path d="M6.3 6.3 L9 9" stroke="#cfcfcf" stroke-width="1.6"/></svg>
<div class="a" style="left:732px;top:562px;width:30px;height:25px;background:#303030;"></div>
<div class="a" style="left:763px;top:562px;width:30px;height:25px;background:#303030;"></div>
<div class="a" style="left:794px;top:562px;width:30px;height:25px;background:#303030;"></div>
<div class="a" style="left:825px;top:562px;width:35px;height:25px;background:#303030;"></div>
<svg style="left:739px;top:568px" width="17" height="14" viewBox="0 0 17 14"><rect x="0" y="0" width="8" height="5" rx="1" fill="#c8c8c8"/><rect x="0" y="6" width="8" height="7" rx="1" fill="#c8c8c8"/><path d="M9 7 h5 M12 4.5 l3 2.5 l-3 2.5" stroke="#c8c8c8" stroke-width="1.5" fill="none"/></svg>
<svg style="left:770px;top:568px" width="16" height="13" viewBox="0 0 16 13"><path d="M1 9 Q3 2 9 1 L15 3 Q13 10 7 12 Z" fill="#c8c8c8"/><path d="M4 8 L12 4" stroke="#303030" stroke-width="1"/></svg>
<svg style="left:802px;top:567px" width="14" height="15" viewBox="0 0 14 15"><path d="M2 11 Q1 4 8 1 L13 3 L12 12 L6 14Z" fill="#777"/></svg>
<svg style="left:832px;top:567px" width="22" height="14" viewBox="0 0 22 14"><circle cx="6" cy="6" r="4.5" stroke="#c8c8c8" stroke-width="1.5" fill="none"/><path d="M3 9 L1 12" stroke="#c8c8c8" stroke-width="1.5"/><path d="M10 3 q5 4 0 8 M14 7 h6 M18 4.5 l3 2.5 l-3 2.5" stroke="#c8c8c8" stroke-width="1.5" fill="none"/></svg>
<div class="a" style="left:0px;top:587px;width:860px;height:1px;background:#1b1b1b;"></div>
<div class="a" style="left:0px;top:588px;width:130px;height:185px;background:#2b2b2b;"></div>
<div class="a" style="left:131px;top:588px;width:729px;height:185px;background:#2a2a2a;"></div>
<div class="a" style="left:0px;top:666px;width:129px;height:20px;background:#3f3f3f;"></div>
<div class="t" style="left:-3px;top:615.86px;font-size:16px;color:#d0d0d0;">rs</div>
<div class="t" style="left:-1.5px;top:667.66px;font-size:16px;color:#d8d8d8;">s</div>
<div class="a" style="left:131px;top:589px;width:729px;height:24px;background:#2e2e2e;"></div>
<div class="t" style="left:136px;top:594.06px;font-size:16px;color:#e0e0e0;transform:scaleX(0.9684);transform-origin:0 0;">Assets</div>
<div class="a" style="left:131px;top:613px;width:729px;height:1px;background:#262626;"></div>
<div class="a" style="left:131px;top:748px;width:729px;height:25px;background:#333333;"></div>
<div class="a" style="left:131px;top:747px;width:729px;height:1px;background:#1c1c1c;"></div>
<div class="a" style="left:785px;top:758.5px;width:58px;height:3px;background:#686868;border-radius:1.5px;"></div>
<svg style="left:812px;top:754px" width="12" height="12" viewBox="0 0 12 12"><circle cx="6" cy="6" r="6" fill="#8e8e8e"/></svg>
<div class="t" style="left:167.7px;top:709.85px;font-size:14px;color:#e0e0e0;transform:scaleX(0.9352);transform-origin:0 0;">Cube</div>
<div class="t" style="left:252.2px;top:709.85px;font-size:14px;color:#e0e0e0;transform:scaleX(0.9454);transform-origin:0 0;">Clouds</div>
<div class="t" style="left:332.8px;top:709.85px;font-size:14px;color:#e0e0e0;transform:scaleX(0.9598);transform-origin:0 0;">Character</div>
<div class="t" style="left:432px;top:709.85px;font-size:14px;color:#e0e0e0;transform:scaleX(0.9481);transform-origin:0 0;">Grass</div>
<div class="t" style="left:520.6px;top:709.85px;font-size:14px;color:#e0e0e0;transform:scaleX(0.9481);transform-origin:0 0;">Grass</div>
<div class="t" style="left:611.5px;top:709.85px;font-size:14px;color:#e0e0e0;transform:scaleX(0.9021);transform-origin:0 0;">Tree</div>
<svg style="left:131px;top:613px" width="729" height="134" viewBox="131 613 729 134"><defs><linearGradient id="clg" x1="0" y1="630" x2="0" y2="700" gradientUnits="userSpaceOnUse"><stop offset="0" stop-color="#2470ba"/><stop offset="0.5" stop-color="#3a93d3"/><stop offset="1" stop-color="#56c0ea"/></linearGradient></defs><polygon points="183,634 210.5,645 183,657 155,645" fill="#d3d3d3"/><polygon points="155,645 183,657 183,696 155,683" fill="#bcbcbc"/><polygon points="183,657 210.5,645 210.5,683 183,696" fill="#a3a3a3"/><rect x="240" y="630" width="66.5" height="70" rx="3" fill="url(#clg)"/><rect x="240.5" y="630.5" width="65.5" height="69" rx="3" fill="none" stroke="#5aa9da" stroke-opacity="0.5"/><ellipse cx="346.5" cy="680" rx="5" ry="8" transform="rotate(20 346.5 680)" fill="#f07a1e"/><ellipse cx="378" cy="679" rx="5" ry="8" transform="rotate(-20 378 679)" fill="#f07a1e"/><path d="M346,676 Q346,668 362,668 Q378,668 378,677 L377,686 Q375,691 362,691 Q348,691 347,686 Z" fill="#f07a1e"/><rect x="349" y="684" width="10" height="14" rx="4" fill="#ea6a18"/><rect x="364" y="684" width="10" height="14" rx="4" fill="#ea6a18"/><ellipse cx="362" cy="650.5" rx="21.5" ry="21" fill="#f27c20"/><ellipse cx="366" cy="655" rx="16.5" ry="13.5" fill="#f8e5cb"/><ellipse cx="360.5" cy="655" rx="2.6" ry="5" fill="#2e1f16"/><ellipse cx="375.5" cy="655" rx="2.4" ry="5" fill="#2e1f16"/><rect x="418.3" y="630.4" width="62" height="70" rx="8" fill="#e6a018"/><rect x="418.3" y="630.4" width="62" height="67" rx="8" fill="#fdbd28"/><path d="M437,654 Q436,643 449.5,643 Q465,643 465,654 Q465,661 456,665 Q453,667 453,672 L446,672 Q445,663 451,659 Q457,656 457,653 Q457,649 450,649 Q444,649 444,655 Z" fill="#ecebdf"/><rect x="445" y="676" width="9" height="9" rx="1" fill="#ecebdf"/><circle cx="424.6" cy="638.3" r="1.6" fill="#c0641c"/><circle cx="473" cy="638.3" r="1.6" fill="#c0641c"/><circle cx="424.6" cy="689.8" r="1.6" fill="#c0641c"/><circle cx="473" cy="689.8" r="1.6" fill="#c0641c"/><polygon points="505,652 537,663 537,696 507,683" fill="#9a5b30"/><polygon points="537,663 572.5,652 571,681 537,696" fill="#7e4c2e"/><path d="M505,650 L505,660 Q510,668 515,662 Q520,672 526,666 Q531,674 537,670 Q544,676 549,668 Q556,672 560,663 Q566,666 572.5,660 L572.5,651 L537,662 Z" fill="#5db82b"/><polygon points="505,649 540,637.7 572.5,651 537,662" fill="#82d030"/><rect x="616.5" y="678" width="12" height="22" rx="3" fill="#8a5733"/><polygon points="621.5,655 645.5,676 632,682.5 612,682.5 598.5,676" fill="#3f9f36"/><polygon points="621.5,655 598.5,676 612,682.5 622,678" fill="#57c346"/><polygon points="621.5,626 638,656.5 622,661 605.5,656.5" fill="#49b23b"/><polygon points="621.5,626 605.5,656.5 618,660" fill="#5fca4c"/></svg>
<div class="a" style="left:0px;top:773px;width:1200px;height:27px;background:#161616;"></div>
<svg style="left:1108px;top:779px" width="14" height="16" viewBox="0 0 14 16"><path d="M1 2 L7 8 L1 14Z M13 2 L7 8 L13 14Z" fill="#c8c8c8"/><path d="M2 1 L13 15" stroke="#1a1a1a" stroke-width="1.5"/><path d="M3 1 L14 15" stroke="#c8c8c8" stroke-width="1.2"/></svg>
<svg style="left:1144px;top:778px" width="20" height="18" viewBox="0 0 20 18"><rect x="7" y="1" width="11" height="10" fill="none" stroke="#c8c8c8" stroke-width="1.6"/><rect x="9" y="3" width="7" height="6" fill="#c8c8c8"/><circle cx="3" cy="6" r="2" fill="#c8c8c8"/><path d="M3 3 V17 M7 14 h8" stroke="#c8c8c8" stroke-width="1.5"/></svg>
<svg style="left:1177px;top:778px" width="18" height="18" viewBox="0 0 18 18"><path d="M5 4 V2.5 a1.5 1.5 0 0 1 1.5-1.5 h5 a1.5 1.5 0 0 1 1.5 1.5 V4" stroke="#c8c8c8" stroke-width="1.4" fill="none"/><rect x="1" y="4" width="16" height="13" rx="3" fill="none" stroke="#c8c8c8" stroke-width="1.5"/><path d="M6 8 L12 13 M7 12 L11 9" stroke="#888" stroke-width="1.5"/></svg>
</body></html>
